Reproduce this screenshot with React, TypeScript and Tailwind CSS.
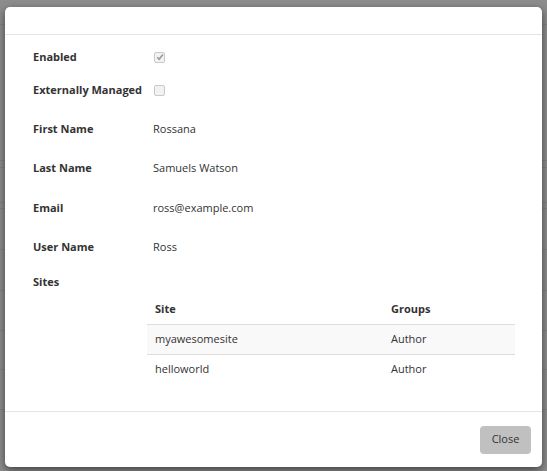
import * as React from "react";

const font = { fontFamily: '"Open Sans", "Noto Sans", sans-serif' };

function Checkbox({ checked }: { checked?: boolean }) {
  return (
    <span className="flex h-[11px] w-[11px] items-center justify-center rounded-[2px] border border-[#c9c9c9] bg-[#f2f2f2]">
      {checked && (
        <svg width="8" height="8" viewBox="0 0 8 8">
          <path d="M1.2 4.3 L3.1 6.2 L6.9 1.4" fill="none" stroke="#9a9a9a" strokeWidth="1.6" />
        </svg>
      )}
    </span>
  );
}

function Row({ label, children, className = "" }: any) {
  return (
    <div className={`flex h-5 items-center ${className}`}>
      <span className="w-[120px] text-[11px] font-bold text-[#333]">{label}</span>
      <div className="text-[11px] text-[#333]">{children}</div>
    </div>
  );
}

const bgLines = [25, 162, 170, 206, 213, 255, 297, 338, 378, 419];

export default function App() {
  const sites = [
    { name: "myawesomesite", group: "Author" },
    { name: "helloworld", group: "Author" },
  ];

  return (
    <div className="relative h-[471px] w-[547px] overflow-hidden bg-[#8d8d8d]" style={font}>
      {/* page behind the overlay */}
      <div className="flex flex-col">
        {bgLines.map((y, i) => (
          <div
            key={y}
            className="border-b border-[#828282]"
            style={{ height: y - (i ? bgLines[i - 1] + 1 : 0) }}
          />
        ))}
      </div>

      <div className="absolute left-[5px] top-[7px] flex h-[460px] w-[537px] flex-col rounded-[5px] bg-white shadow-[0_3px_9px_rgba(0,0,0,0.55)]">
        <div className="h-[28px] border-b border-[#e5e5e5]" />

        <div className="flex-1 pl-[28px] pt-[12px]">
          <Row label="Enabled">
            <div className="pl-[1px]">
              <Checkbox checked />
            </div>
          </Row>
          <Row label="Externally Managed" className="mt-[13px]">
            <div className="pl-[1px]">
              <Checkbox />
            </div>
          </Row>
          <Row label="First Name" className="mt-[19px]">Rossana</Row>
          <Row label="Last Name" className="mt-[19px]">Samuels Watson</Row>
          <Row label="Email" className="mt-[20px]">ross@example.com</Row>
          <Row label="User Name" className="mt-[19px]">Ross</Row>
          <Row label="Sites" className="mt-[15px]" />

          <table className="ml-[114px] mt-[2px] w-[368px] border-collapse text-[11px] text-[#333]">
            <thead>
              <tr className="h-[30px] border-b border-[#dddddd]">
                <th className="w-[236px] px-2 text-left font-bold">Site</th>
                <th className="px-2 text-left font-bold">Groups</th>
              </tr>
            </thead>
            <tbody>
              {sites.map((s, i) => (
                <tr
                  key={s.name}
                  className={`h-[30px] ${i === 0 ? "border-b border-[#dddddd] bg-[#f9f9f9]" : ""}`}
                >
                  <td className="px-2">{s.name}</td>
                  <td className="px-2">{s.group}</td>
                </tr>
              ))}
            </tbody>
          </table>
        </div>

        <div className="flex h-[56px] items-center justify-end border-t border-[#e5e5e5] pr-[11px]">
          <button className="h-[28px] w-[51px] rounded-[4px] bg-[#c0c0c0] text-[11px] text-[#333]">
            Close
          </button>
        </div>
      </div>
    </div>
  );
}
